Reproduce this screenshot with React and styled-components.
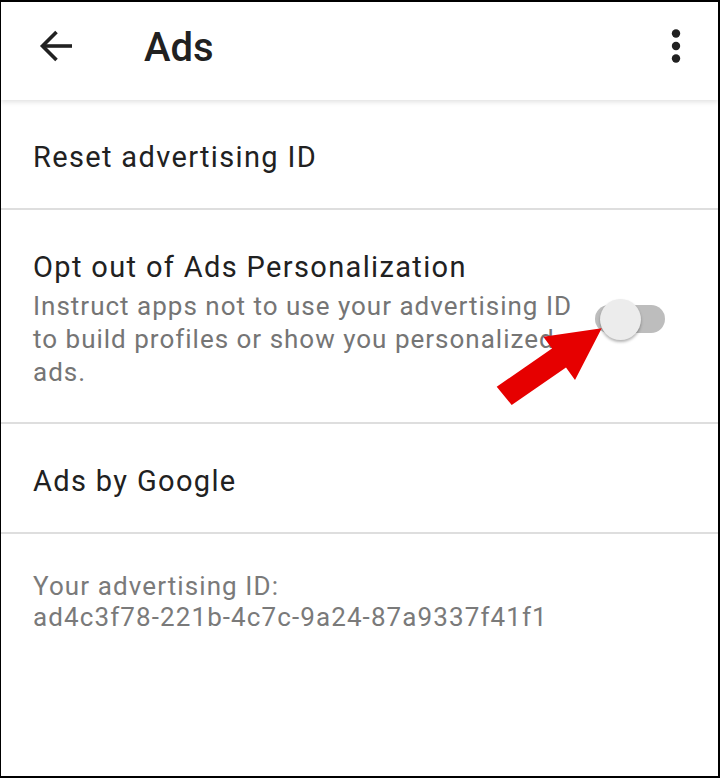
import React, { useState } from "react";
import styled, { createGlobalStyle } from "styled-components";

const GlobalStyle = createGlobalStyle`
  html, body {
    margin: 0;
    padding: 0;
    background: #ffffff;
  }
  body {
    font-family: Roboto, "Noto Sans", "Liberation Sans", sans-serif;
    -webkit-font-smoothing: antialiased;
  }
`;

function BackIcon() {
  return (
    <svg width="48" height="48" viewBox="0 0 48 48" fill="none">
      <polyline points="24.5,10 10.5,24 24.5,38" stroke="#212121" strokeWidth="3.6" strokeLinejoin="miter" />
      <line x1="10.5" y1="24" x2="40" y2="24" stroke="#212121" strokeWidth="3.6" />
    </svg>
  );
}

function MoreIcon() {
  return (
    <svg width="48" height="48" viewBox="0 0 48 48" fill="#212121">
      <circle cx="24" cy="11.5" r="4.2" />
      <circle cx="24" cy="24" r="4.2" />
      <circle cx="24" cy="36.5" r="4.2" />
    </svg>
  );
}

// annotation arrow drawn over the screenshot
function PointerArrow() {
  return (
    <ArrowLayer viewBox="0 0 720 778" width="720" height="778">
      <polygon
        fill="#e60000"
        points="496.7,386.7 552,348.5 543.3,336.7 601.7,328.3 575,380 566,367.5 511.7,405"
      />
    </ArrowLayer>
  );
}

export default function App() {
  const [optOut, setOptOut] = useState(false);

  return (
    <Frame>
      <GlobalStyle />
      <AppBar>
        <IconButton aria-label="Back">
          <BackIcon />
        </IconButton>
        <Title>Ads</Title>
        <IconButton aria-label="More options" push>
          <MoreIcon />
        </IconButton>
      </AppBar>

      <List>
        <Row>
          <RowTitle>Reset advertising ID</RowTitle>
        </Row>
        <Row>
          <TextCol>
            <RowTitle>Opt out of Ads Personalization</RowTitle>
            <Summary>
              Instruct apps not to use your advertising ID to build profiles or show you personalized ads.
            </Summary>
          </TextCol>
          <Switch role="switch" aria-checked={optOut} onClick={() => setOptOut(!optOut)}>
            <Track on={optOut} />
            <Thumb on={optOut} />
          </Switch>
        </Row>
        <Row>
          <RowTitle>Ads by Google</RowTitle>
        </Row>
        <Footer>
          Your advertising ID:
          <br />
          ad4c3f78-221b-4c7c-9a24-87a9337f41f1
        </Footer>
      </List>

      <PointerArrow />
    </Frame>
  );
}

const Frame = styled.div`
  position: relative;
  width: 720px;
  height: 778px;
  box-sizing: border-box;
  border-style: solid;
  border-color: #000000;
  border-width: 2px 2px 2px 1px;
  background: #ffffff;
  overflow: hidden;
`;

const AppBar = styled.header`
  position: relative;
  z-index: 1;
  height: 98px;
  box-sizing: border-box;
  display: flex;
  align-items: center;
  padding: 0 18px 10px 31px;
  background: #ffffff;
  box-shadow: 0 2px 5px rgba(0, 0, 0, 0.12);
`;

const IconButton = styled.button`
  width: 48px;
  height: 48px;
  padding: 0;
  border: 0;
  background: transparent;
  display: flex;
  align-items: center;
  justify-content: center;
  margin-left: ${(p) => (p.push ? "auto" : "0")};
  cursor: pointer;
`;

const Title = styled.h1`
  margin: 4px 0 0 64px;
  font-size: 40px;
  line-height: 48px;
  font-weight: 500;
  color: #212121;
`;

const List = styled.div`
  display: flex;
  flex-direction: column;
`;

const Row = styled.div`
  display: flex;
  align-items: center;
  gap: 16px;
  padding: 39px 53px 33px 32px;
  border-bottom: 2px solid #dedede;
`;

const TextCol = styled.div`
  flex: 1;
  display: flex;
  flex-direction: column;
  gap: 5px;
`;

const RowTitle = styled.div`
  font-size: 29px;
  line-height: 36px;
  letter-spacing: 1.35px;
  color: #212121;
`;

const Summary = styled.div`
  font-size: 26px;
  line-height: 33px;
  letter-spacing: 1px;
  color: #757575;
`;

const Footer = styled.div`
  padding: 37px 32px;
  font-size: 26px;
  line-height: 31px;
  letter-spacing: 1.1px;
  color: #7a7a7a;
`;

const Switch = styled.div`
  position: relative;
  flex: none;
  width: 70px;
  height: 42px;
  display: flex;
  align-items: center;
  cursor: pointer;
`;

const Track = styled.div`
  width: 70px;
  height: 28px;
  border-radius: 14px;
  background: ${(p) => (p.on ? "#9fd3cd" : "#bdbdbd")};
`;

const Thumb = styled.div`
  position: absolute;
  top: 0.5px;
  left: ${(p) => (p.on ? "29px" : "5px")};
  width: 41px;
  height: 41px;
  border-radius: 50%;
  background: ${(p) => (p.on ? "#009688" : "#ececec")};
  box-shadow: 0 2px 3px rgba(0, 0, 0, 0.3);
`;

const ArrowLayer = styled.svg`
  position: absolute;
  top: -2px;
  left: -1px;
  pointer-events: none;
  z-index: 2;
`;
